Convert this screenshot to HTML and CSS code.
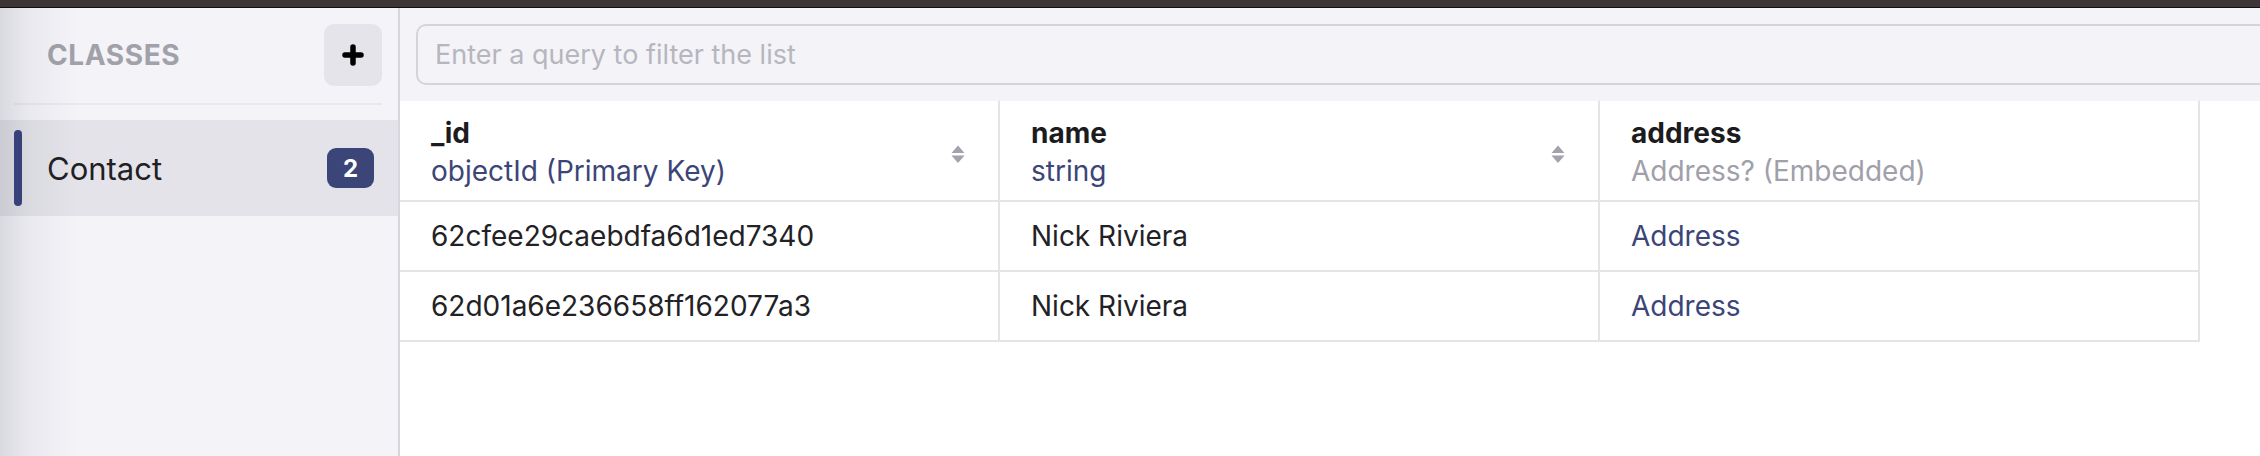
FILE: index.html
```html
<!DOCTYPE html>
<html lang="en">
<head>
<meta charset="utf-8">
<title>Realm Studio - Contact</title>
<link rel="stylesheet" href="styles.css">
</head>
<body>
<div class="topbar"></div>
<div class="app">
  <aside class="sidebar">
    <div class="side-head">
      <span class="side-title">CLASSES</span>
      <button class="add-btn" aria-label="Add class">
        <svg width="22" height="22" viewBox="0 0 22 22"><path d="M11 3V19M3 11H19" stroke="#000" stroke-width="5.5" stroke-linecap="round" fill="none"/></svg>
      </button>
    </div>
    <div class="class-list">
      <div class="class-item active">
        <span class="indicator"></span>
        <span class="class-name">Contact</span>
        <span class="badge">2</span>
      </div>
    </div>
  </aside>
  <main class="content">
    <div class="toolbar">
      <input class="search" type="text" placeholder="Enter a query to filter the list">
    </div>
    <div class="grid">
      <div class="cell head">
        <div class="head-text">
          <div class="col-name">_id</div>
          <div class="col-type">objectId (Primary Key)</div>
        </div>
        <svg class="sort" width="14" height="19" viewBox="0 0 14 19"><path d="M7 0.5L13.5 8H0.5Z M0.5 10.5H13.5L7 18Z" fill="#a2a2ad"/></svg>
      </div>
      <div class="cell head">
        <div class="head-text">
          <div class="col-name">name</div>
          <div class="col-type">string</div>
        </div>
        <svg class="sort" width="14" height="19" viewBox="0 0 14 19"><path d="M7 0.5L13.5 8H0.5Z M0.5 10.5H13.5L7 18Z" fill="#a2a2ad"/></svg>
      </div>
      <div class="cell head">
        <div class="head-text">
          <div class="col-name">address</div>
          <div class="col-type muted">Address? (Embedded)</div>
        </div>
      </div>

      <div class="cell">62cfee29caebdfa6d1ed7340</div>
      <div class="cell">Nick Riviera</div>
      <div class="cell link">Address</div>

      <div class="cell">62d01a6e236658ff162077a3</div>
      <div class="cell">Nick Riviera</div>
      <div class="cell link">Address</div>
    </div>
  </main>
</div>
</body>
</html>
```

FILE: styles.css
```css
html, body {
  margin: 0;
  padding: 0;
  height: 456px;
  overflow: hidden;
  background: #ffffff;
  font-family: Inter, "Noto Sans", sans-serif;
  color: #1f1f24;
}

.topbar {
  height: 7px;
  background: #3e3636;
  border-bottom: 1px solid #111111;
}

.app {
  display: flex;
  height: 448px;
}

/* Sidebar */
.sidebar {
  position: relative;
  flex: 0 0 398px;
  background: #f3f3f8;
  border-right: 2px solid #d6d6de;
}

.sidebar::before {
  content: "";
  position: absolute;
  top: 0;
  bottom: 0;
  left: 0;
  width: 80px;
  background: linear-gradient(to right, rgba(40, 40, 60, 0.13), rgba(40, 40, 60, 0.05) 28px, rgba(40, 40, 60, 0) 78px);
  pointer-events: none;
  z-index: 1;
}

.side-head {
  display: flex;
  align-items: center;
  justify-content: space-between;
  margin: 0 16px 0 14px;
  padding: 16px 0 17px 33px;
  border-bottom: 2px solid #e8e8ee;
}

.side-title {
  font-size: 28px;
  font-weight: 700;
  letter-spacing: 0.6px;
  color: #a1a1a9;
}

.add-btn {
  width: 58px;
  height: 62px;
  border: none;
  border-radius: 10px;
  background: #e4e4ea;
  display: flex;
  align-items: center;
  justify-content: center;
  padding: 0;
}

.class-list {
  padding-top: 15px;
}

.class-item {
  display: flex;
  align-items: center;
  height: 96px;
  padding: 0 24px 0 14px;
  background: #e3e3e9;
}

.indicator {
  position: relative;
  z-index: 2;
  width: 8px;
  height: 76px;
  border-radius: 4px;
  background: #38427a;
  margin-right: 25px;
}

.class-name {
  flex: 1;
  font-size: 31px;
  color: #1f1f24;
}

.badge {
  width: 47px;
  height: 40px;
  border-radius: 9px;
  background: #3b4577;
  color: #ffffff;
  font-size: 24px;
  font-weight: 700;
  display: flex;
  align-items: center;
  justify-content: center;
}

/* Content */
.content {
  flex: 1;
  min-width: 0;
  overflow: hidden;
  background: #ffffff;
}

.toolbar {
  background: #f3f3f8;
  padding: 16px 0 16px 16px;
}

.search {
  display: block;
  box-sizing: border-box;
  width: calc(100% + 40px);
  height: 61px;
  border: 2px solid #d2d5da;
  border-radius: 10px;
  background: #f3f3f8;
  padding: 0 17px;
  font-family: Inter, "Noto Sans", sans-serif;
  font-size: 27px;
  color: #1f1f24;
  outline: none;
}

.search::placeholder {
  color: #b6b6be;
}

.grid {
  display: grid;
  grid-template-columns: repeat(3, 600px);
}

.cell {
  box-sizing: border-box;
  height: 70px;
  display: flex;
  align-items: center;
  padding: 0 31px;
  border-right: 2px solid #e4e4e4;
  border-bottom: 2px solid #e4e4e4;
  font-size: 28px;
  color: #222226;
  white-space: nowrap;
}

.cell.head {
  height: 101px;
  padding: 13px 33px 10px 31px;
  align-items: center;
  justify-content: space-between;
}

.head-text {
  line-height: 38px;
  align-self: flex-start;
}

.col-name {
  font-weight: 700;
  color: #1c1c1f;
}

.col-type {
  color: #3b4577;
}

.col-type.muted {
  color: #a0a0aa;
}

.sort {
  margin-top: 4px;
  flex-shrink: 0;
}

.cell.link {
  color: #3b4577;
}
```
